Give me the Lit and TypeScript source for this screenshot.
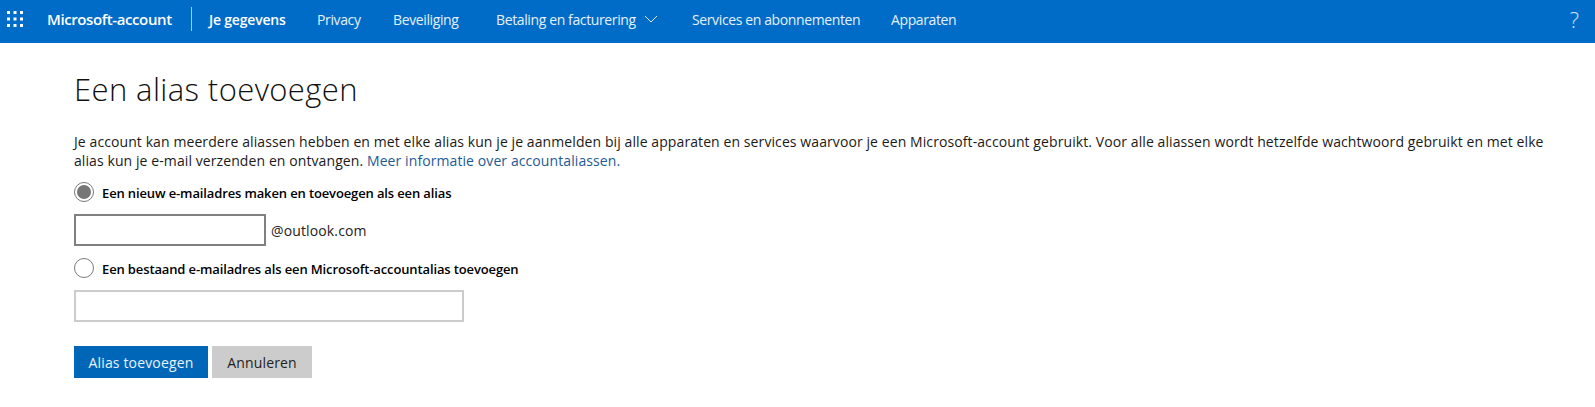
import { LitElement, html, svg, css } from "lit";
import { customElement } from "lit/decorators.js";

@customElement("app-root")
export class AppRoot extends LitElement {
  static styles = css`
    :host { display: block; font-family: "Open Sans", "Noto Sans", sans-serif; color: #000; background: #fff; height: 407px; overflow: hidden; }
    * { box-sizing: border-box; }
    header { height: 43px; padding-bottom: 5px; background: #006cc7; color: #fff; display: flex; align-items: center; font-size: 14px; }
    .waffle { margin-left: 7px; width: 16px; height: 16px; display: block; flex: none; }
    .brand { margin-left: 24px; font-weight: 600; font-size: 15px; letter-spacing: -0.4px; width: 144px; white-space: nowrap; }
    .divider { width: 1px; height: 24px; background: #a9cbea; }
    nav { display: flex; align-items: center; margin-left: 17px; white-space: nowrap; letter-spacing: -0.38px; color: #e6f0fa; }
    nav span { display: block; }
    nav .on { font-weight: 600; color: #fff; width: 108px; letter-spacing: -0.2px; }
    .privacy { width: 76px; }
    .sec { width: 103px; }
    .pay { width: 149px; }
    .chev { width: 47px; height: 8px; display: block; }
    .svc { width: 199px; }
    .help { margin-left: auto; margin-right: 16px; font-size: 22px; font-weight: 300; line-height: 24px; color: #cfe3f6; }
    main { padding: 24px 0 0 74px; }
    h1 { margin: 0; font-weight: 300; font-size: 31px; line-height: 44px; letter-spacing: 0.4px; color: #111; }
    p { margin: 21px 0 0; font-size: 14px; line-height: 19px; width: 1500px; letter-spacing: 0.09px; color: #1a1a1a; }
    a { color: #1d5a94; text-decoration: none; }
    .opt { display: flex; align-items: center; height: 20px; font-size: 13px; font-weight: 600; letter-spacing: -0.13px; gap: 8px; }
    .lbl { padding-top: 2px; }
    .radio { width: 20px; height: 20px; border-radius: 50%; border: 1px solid #7a7a7a; background: #fff; display: flex; align-items: center; justify-content: center; }
    .dot { width: 14px; height: 14px; border-radius: 50%; background: #767676; }
    .o1 { margin-top: 12px; }
    .row { display: flex; align-items: center; margin-top: 12px; gap: 5px; font-size: 14px; letter-spacing: 0.13px; color: #222; }
    .box { height: 32px; border: 2px solid #808080; background: #fff; }
    .b1 { width: 192px; }
    .b2 { width: 390px; border-color: #ccc; margin-top: 12px; }
    .o2 { margin-top: 12px; }
    .btns { display: flex; gap: 4px; margin-top: 24px; font-size: 14px; letter-spacing: 0.15px; }
    .btn { height: 32px; display: flex; align-items: center; justify-content: center; }
    .pri { width: 134px; background: #0067b8; color: #e8f2fb; }
    .sec-btn { width: 100px; background: #ccc; color: #222; }
  `;

  render() {
    const dots = [0, 6.5, 13].flatMap((y) => [0, 6.5, 13].map((x) => svg`<rect x=${x} y=${y} width="3" height="3" fill="#fff"></rect>`));
    return html`
      <header>
        <svg class="waffle" viewBox="0 0 16 16">${dots}</svg>
        <span class="brand">Microsoft-account</span>
        <span class="divider"></span>
        <nav>
          <span class="on">Je gegevens</span>
          <span class="privacy">Privacy</span>
          <span class="sec">Beveiliging</span>
          <span class="pay">Betaling en facturering</span>
          <svg class="chev" viewBox="0 0 47 8"><path d="M0 1 L6 7 L12 1" fill="none" stroke="#dcebf8" stroke-width="1"></path></svg>
          <span class="svc">Services en abonnementen</span>
          <span>Apparaten</span>
        </nav>
        <span class="help">?</span>
      </header>
      <main>
        <h1>Een alias toevoegen</h1>
        <p>Je account kan meerdere aliassen hebben en met elke alias kun je je aanmelden bij alle apparaten en services waarvoor je een Microsoft-account gebruikt. Voor alle aliassen wordt hetzelfde wachtwoord gebruikt en met elke alias kun je e-mail verzenden en ontvangen. <a>Meer informatie over accountaliassen.</a></p>
        <div class="opt o1"><span class="radio"><span class="dot"></span></span><span class="lbl">Een nieuw e-mailadres maken en toevoegen als een alias</span></div>
        <div class="row"><span class="box b1"></span>@outlook.com</div>
        <div class="opt o2"><span class="radio"></span><span class="lbl">Een bestaand e-mailadres als een Microsoft-accountalias toevoegen</span></div>
        <div class="box b2"></div>
        <div class="btns"><span class="btn pri">Alias toevoegen</span><span class="btn sec-btn">Annuleren</span></div>
      </main>
    `;
  }
}
